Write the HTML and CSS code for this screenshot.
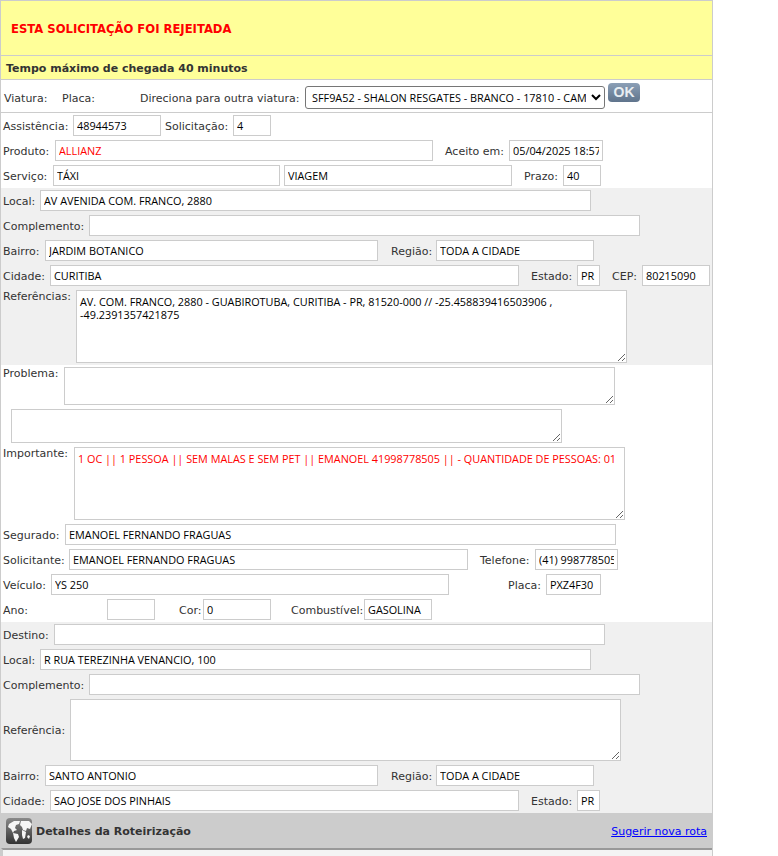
FILE: index.html
```html
<!DOCTYPE html>
<html lang="pt">
<head>
<meta charset="utf-8">
<title>Solicitação</title>
<link rel="stylesheet" href="styles.css">
</head>
<body>
<main class="panel">
  <header class="alert">ESTA SOLICITAÇÃO FOI REJEITADA</header>
  <div class="arrival">Tempo máximo de chegada 40 minutos</div>
  <div class="vehicle">
    <span class="lb w58">Viatura:</span><span class="lb w78">Placa:</span>
    <label class="lb w165" for="v">Direciona para outra viatura:</label>
    <select id="v" class="vselect"><option>SFF9A52 - SHALON RESGATES - BRANCO - 17810 - CAMINHÃO</option></select>
    <button class="ok" type="button">OK</button>
  </div>
  <section class="group first">
    <div class="row"><span class="lb w70">Assistência:</span><input class="w88" value="48944573"><span class="lb sp4 w68">Solicitação:</span><input class="w38" value="4"></div>
    <div class="row"><span class="lb w52">Produto:</span><input class="w378 red" value="ALLIANZ"><span class="lb sp12 w64">Aceito em:</span><input class="w94" value="05/04/2025 18:57"></div>
    <div class="row"><span class="lb w50">Serviço:</span><input class="w227" value="TÁXI"><input class="w228 sp4" value="VIAGEM"><span class="lb sp12 w39">Prazo:</span><input class="w38" value="40"></div>
  </section>
  <section class="group shade">
    <div class="row"><span class="lb w37">Local:</span><input class="w551" value="AV AVENIDA COM. FRANCO, 2880"></div>
    <div class="row"><span class="lb w86">Complemento:</span><input class="w551" value=""></div>
    <div class="row"><span class="lb w42">Bairro:</span><input class="w333" value="JARDIM BOTANICO"><span class="lb sp13 w45">Região:</span><input class="w158" value="TODA A CIDADE"></div>
    <div class="row"><span class="lb w47">Cidade:</span><input class="w469" value="CURITIBA"><span class="lb sp12 w46">Estado:</span><input class="w23" value="PR"><span class="lb sp12 w30">CEP:</span><input class="w68" value="80215090"></div>
    <div class="row"><span class="lb top w73">Referências:</span><textarea class="w551 h73">AV. COM. FRANCO, 2880 - GUABIROTUBA, CURITIBA - PR, 81520-000 // -25.458839416503906 , -49.2391357421875</textarea></div>
  </section>
  <section class="group">
    <div class="row"><span class="lb top w61">Problema:</span><textarea class="w551 h38"></textarea></div>
    <div class="row"><textarea class="sp8 w551 h34"></textarea></div>
    <div class="row"><span class="lb top w71">Importante:</span><textarea class="w551 h73 red">1 OC || 1 PESSOA || SEM MALAS E SEM PET || EMANOEL 41998778505 || - QUANTIDADE DE PESSOAS: 01</textarea></div>
    <div class="row"><span class="lb w62">Segurado:</span><input class="w551" value="EMANOEL FERNANDO FRAGUAS"></div>
    <div class="row"><span class="lb w66">Solicitante:</span><input class="w399" value="EMANOEL FERNANDO FRAGUAS"><span class="lb sp12 w55">Telefone:</span><input class="w83" value="(41) 998778505"></div>
    <div class="row"><span class="lb w48">Veículo:</span><input class="w398" value="YS 250"><span class="lb sp59 w38">Placa:</span><input class="w55" value="PXZ4F30"></div>
    <div class="row"><span class="lb w104">Ano:</span><input class="w48" value=""><span class="lb sp24 w24">Cor:</span><input class="w68" value="0"><span class="lb sp20 w73">Combustível:</span><input class="w68" value="GASOLINA"></div>
  </section>
  <section class="group shade">
    <div class="row"><span class="lb w51">Destino:</span><input class="w551" value=""></div>
    <div class="row"><span class="lb w37">Local:</span><input class="w551" value="R RUA TEREZINHA VENANCIO, 100"></div>
    <div class="row"><span class="lb w86">Complemento:</span><input class="w551" value=""></div>
    <div class="row center"><span class="lb w67">Referência:</span><textarea class="w551 h62"></textarea></div>
    <div class="row"><span class="lb w42">Bairro:</span><input class="w333" value="SANTO ANTONIO"><span class="lb sp13 w45">Região:</span><input class="w158" value="TODA A CIDADE"></div>
    <div class="row"><span class="lb w47">Cidade:</span><input class="w469" value="SAO JOSE DOS PINHAIS"><span class="lb sp12 w46">Estado:</span><input class="w23" value="PR"></div>
  </section>
  <div class="route">
    <svg class="globe" width="26" height="26" viewBox="0 0 26 26" aria-hidden="true">
      <defs><linearGradient id="gl" x1="0" y1="0" x2="0" y2="1"><stop offset="0" stop-color="#8a8a8a"/><stop offset="1" stop-color="#333"/></linearGradient></defs>
      <rect width="26" height="26" rx="4" fill="url(#gl)"/>
      <path d="M3 6l5-3 6 0-1 3-3 1-1 3 2 2-3 1-1 2-2-4-3-2zM15 3l8 0 3 3-2 5-3-1-1 3-3-1-1-3-2-2zM7 15l5 1 1 3-3 5-2-4zM16 12l4 2-1 6-2 1-1-4zM22 17l2 1-1 3-2-2z" fill="#f6f6f6"/>
    </svg>
    <h2 class="route-title">Detalhes da Roteirização</h2>
    <a class="route-link" href="#">Sugerir nova rota</a>
  </div>
  <div class="route-body"></div>
</main>
</body>
</html>
```
FILE: styles.css
```css
html, body { margin: 0; padding: 0; background: #fff; overflow: hidden; }
body { height: 856px; font-family: "DejaVu Sans", Verdana, sans-serif; font-size: 11px; color: #333; }
.panel { width: 711px; border: 1px solid #ccc; border-width: 1px 1px 0 1px; margin: 0; }
.alert { height: 55px; box-sizing: border-box; background: #ff9; border-bottom: 1px solid #ccc; color: #f00; font-weight: bold; font-size: 11.6px; line-height: 56px; padding-left: 10px; }
.arrival { height: 24px; box-sizing: border-box; background: #ff9; border-bottom: 1px solid #ccc; font-weight: bold; line-height: 25px; padding-left: 5px; color: #333; }
.vehicle { height: 33px; box-sizing: border-box; border-bottom: 1px solid #ccc; display: flex; align-items: center; padding-left: 3px; }
.vehicle .lb { padding-top: 2px; }
.vselect { width: 300px; height: 23px; margin: 2px 0 0 0; box-sizing: border-box; font: 10.85px "Open Sans", Tahoma, sans-serif; color: #000; background: #fff; border: 1px solid #767676; border-radius: 3px; padding: 0 2px; }
.ok { width: 32px; height: 19px; margin: -7px 0 0 3px; padding: 0 0 2px; border: 0; border-radius: 4px; background: linear-gradient(#8b9fb6, #5f748c); color: #e8eef2; font: bold 14px "Liberation Sans", sans-serif; }
.group { display: flex; flex-direction: column; gap: 4px; padding: 2px 0; }
.group.shade { background: #f0f0f0; }
.row { display: flex; align-items: flex-start; padding-left: 2px; }
.row.center { align-items: center; }
.lb { flex: none; height: 21px; line-height: 23px; white-space: nowrap; color: #333; }
.lb.top { line-height: 14px; }
.row.center .lb { line-height: 21px; }
input, textarea { flex: none; box-sizing: border-box; margin: 0; border: 1px solid #ccc; background: #fff; color: #000; font: 10.85px "Open Sans", Tahoma, sans-serif; padding: 1px 3px; border-radius: 0; outline: 0; }
input { height: 21px; }
textarea { display: block; resize: both; padding: 4px 3px; line-height: 13px; }
input.red, textarea.red { color: #f00; }
.route { height: 35px; background: #ccc; display: flex; align-items: center; padding: 0 5px; gap: 4px; }
.globe { flex: none; }
.route-title { margin: 2px 0 0; font-size: 11px; font-weight: bold; color: #333; flex: 1; }
.route-link { color: #00f; font-size: 11px; margin-top: 2px; }
.route-body { height: 6px; border-top: 2px solid #999; border-left: 2px solid #ccc; background: #f4f4f4; }
.h73 { height: 73px; } .h38 { height: 38px; } .h34 { height: 34px; } .h62 { height: 62px; }
.w23 { width: 23px; } .w24 { width: 24px; } .w30 { width: 30px; } .w37 { width: 37px; } .w38 { width: 38px; } .w39 { width: 39px; }
.w42 { width: 42px; } .w45 { width: 45px; } .w46 { width: 46px; } .w47 { width: 47px; } .w48 { width: 48px; }
.w50 { width: 50px; } .w51 { width: 51px; } .w52 { width: 52px; } .w55 { width: 55px; } .w58 { width: 58px; }
.w61 { width: 61px; } .w62 { width: 62px; } .w64 { width: 64px; } .w66 { width: 66px; } .w67 { width: 67px; } .w68 { width: 68px; }
.w70 { width: 70px; } .w71 { width: 71px; } .w73 { width: 73px; } .w78 { width: 78px; } .w83 { width: 83px; } .w86 { width: 86px; } .w88 { width: 88px; }
.w94 { width: 94px; } .w104 { width: 104px; } .w158 { width: 158px; } .w165 { width: 165px; } .w227 { width: 227px; } .w228 { width: 228px; }
.w333 { width: 333px; } .w378 { width: 378px; } .w398 { width: 398px; } .w399 { width: 399px; } .w469 { width: 469px; } .w551 { width: 551px; }
.sp4 { margin-left: 4px; } .sp8 { margin-left: 8px; } .sp12 { margin-left: 12px; } .sp13 { margin-left: 13px; } .sp20 { margin-left: 20px; } .sp24 { margin-left: 24px; } .sp59 { margin-left: 59px; }
```
